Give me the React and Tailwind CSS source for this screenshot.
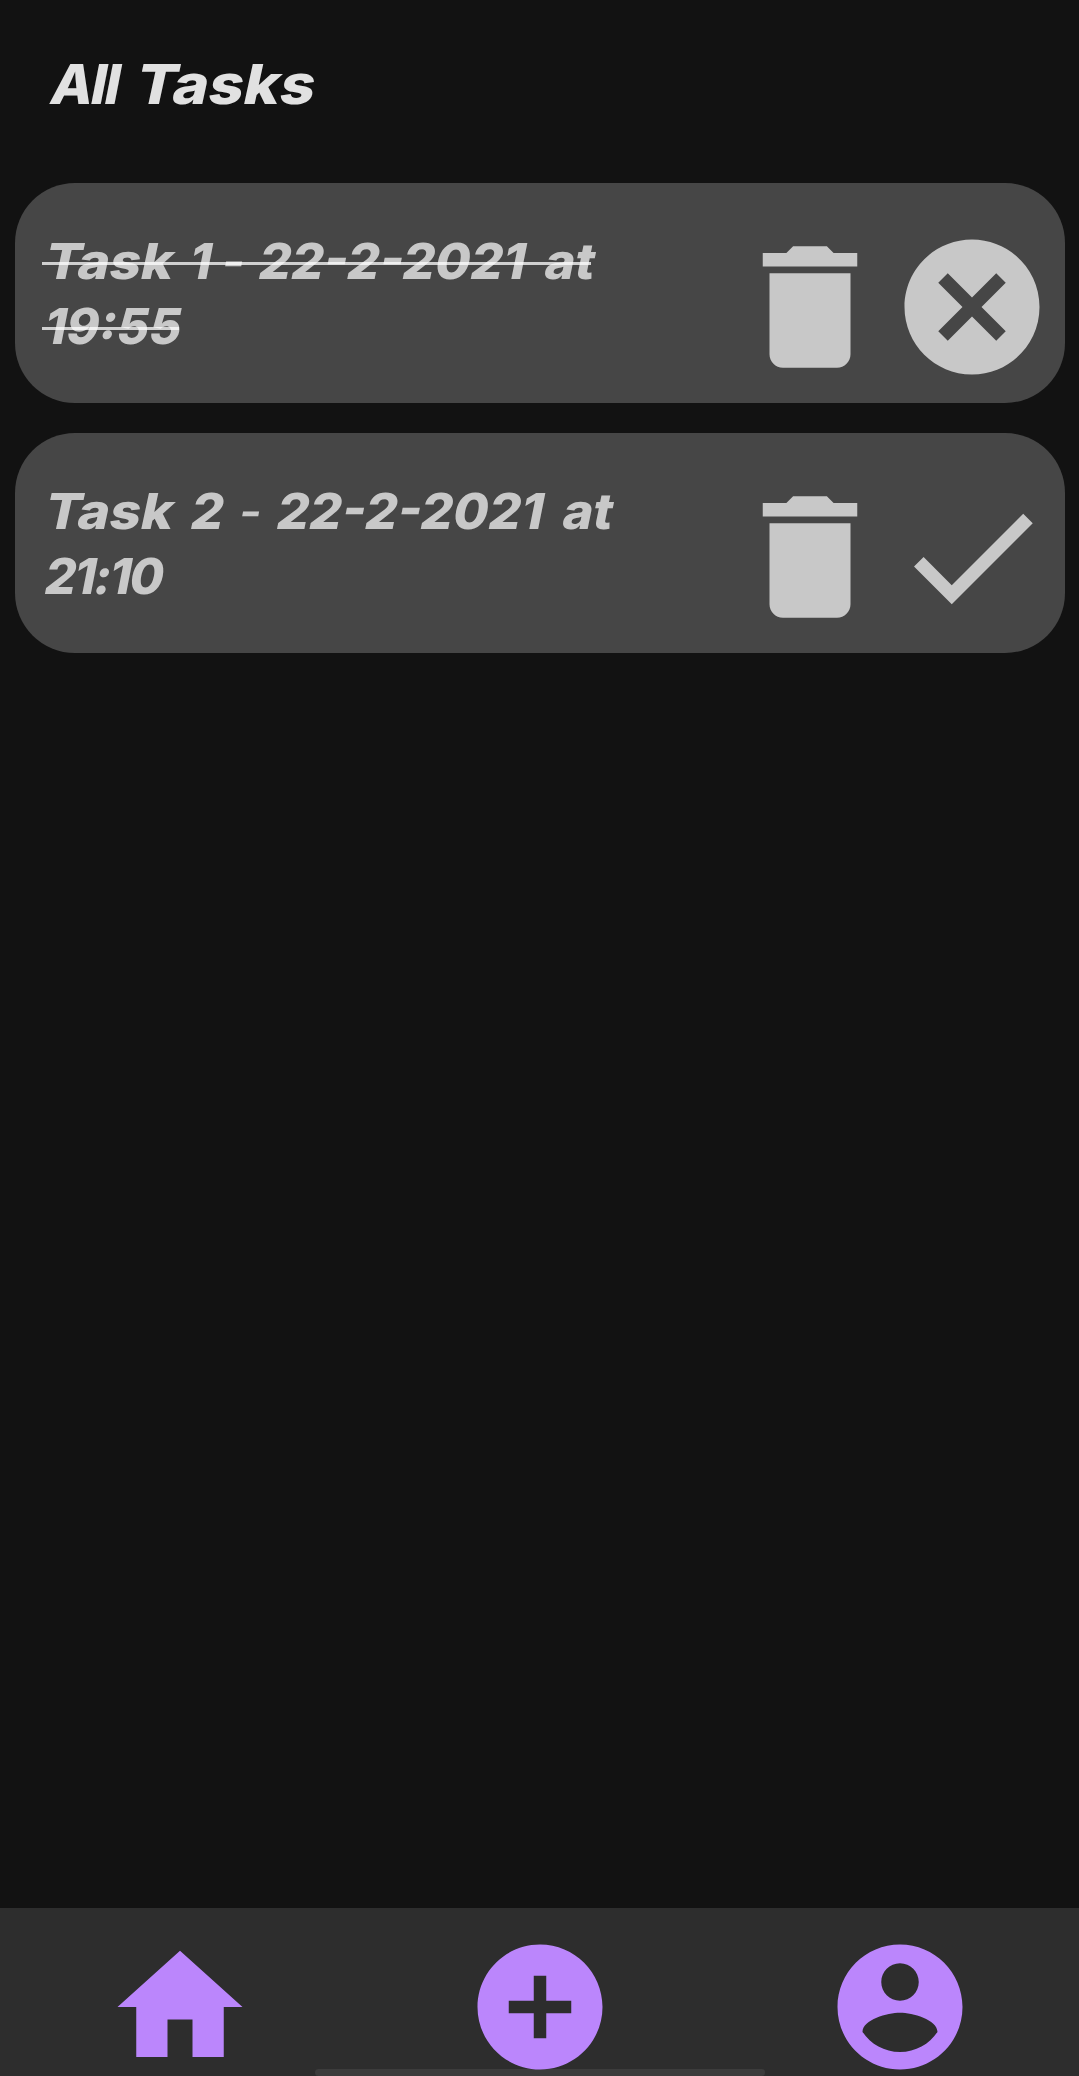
const ICONS = {
  trash: "M6 19c0 1.1.9 2 2 2h8c1.1 0 2-.9 2-2V7H6v12zM19 4h-3.5l-1-1h-5l-1 1H5v2h14V4z",
  cancel:
    "M12 2C6.47 2 2 6.47 2 12s4.47 10 10 10 10-4.47 10-10S17.53 2 12 2zm5 13.59L15.59 17 12 13.41 8.41 17 7 15.59 10.59 12 7 8.41 8.41 7 12 10.59 15.59 7 17 8.41 13.41 12 17 15.59z",
  check: "M9 16.17L4.83 12l-1.42 1.41L9 19 21 7l-1.41-1.41L9 16.17z",
  home: "M10 20v-6h4v6h5v-8h3L12 3 2 12h3v8z",
  add: "M12 2C6.48 2 2 6.48 2 12s4.48 10 10 10 10-4.48 10-10S17.52 2 12 2zm5 11h-4v4h-2v-4H7v-2h4V7h2v4h4v2z",
  account:
    "M12 2C6.48 2 2 6.48 2 12s4.48 10 10 10 10-4.48 10-10S17.52 2 12 2zm0 3c1.66 0 3 1.34 3 3s-1.34 3-3 3-3-1.34-3-3 1.34-3 3-3zm0 14.2c-2.5 0-4.71-1.28-6-3.22.03-1.99 4-3.08 6-3.08 1.99 0 5.97 1.09 6 3.08-1.29 1.94-3.5 3.22-6 3.22z",
};

function Icon({ name, className }) {
  return (
    <svg viewBox="0 0 24 24" fill="currentColor" className={className}>
      <path d={ICONS[name]} />
    </svg>
  );
}

const TASKS = [
  {
    done: true,
    lines: [
      [
        ["Task", "w-[145px] scale-x-[1.1]"],
        ["1", "w-[32px]"],
        ["-", "w-[37px] font-medium"],
        ["22-2-2021", "w-[286px] scale-x-[1.03]"],
        ["at", "w-[49px] scale-x-[1.04]"],
      ],
      [["19:55", "w-[137px]"]],
    ],
  },
  {
    done: false,
    lines: [
      [
        ["Task", "w-[146px] scale-x-[1.1]"],
        ["2", "w-[48px] scale-x-[1.04]"],
        ["-", "w-[38px] font-medium"],
        ["22-2-2021", "w-[286px] scale-x-[1.03]"],
        ["at", "w-[49px] scale-x-[1.04]"],
      ],
      [["21:10", "w-[120px] tracking-[-2px]"]],
    ],
  },
];

function TaskCard({ task }) {
  return (
    <article className="flex h-[220px] justify-between rounded-[60px] bg-[#464646] pt-[46px] pr-[11.7px] pl-[27px] text-[#c8c8c8]">
      <div className="text-[49.5px] leading-[65px] font-extrabold">
        {task.lines.map((line, i) => (
          <div key={i} className="relative flex w-fit whitespace-pre">
            {line.map(([word, cls], j) => (
              <span key={j} className={`block origin-[0_51px] -skew-x-[11deg] ${cls}`}>
                {word}
              </span>
            ))}
            {task.done && <span className="absolute inset-x-0 top-[33px] h-[3px] bg-white/75" />}
          </div>
        ))}
      </div>
      <div className="-mt-[3px] flex">
        <Icon name="trash" className="size-[162px]" />
        <Icon name={task.done ? "cancel" : "check"} className="size-[162px]" />
      </div>
    </article>
  );
}

export default function App() {
  return (
    <div className="flex h-[2076px] w-[1079px] flex-col overflow-hidden bg-[#121212] font-['Inter',sans-serif]">
      <h1 className="flex h-[183px] pt-[51px] pl-[48px] text-[55px] leading-[66px] font-extrabold text-[#e1e1e1]">
        <span className="block w-[85px] origin-[0_53px] -skew-x-[11deg] tracking-[-2px]">All</span>
        <span className="block origin-[0_53px] scale-x-[1.11] -skew-x-[11deg]">Tasks</span>
      </h1>
      <main className="flex flex-1 flex-col gap-[30px] pr-[14px] pl-[15px]">
        {TASKS.map((task, i) => (
          <TaskCard key={i} task={task} />
        ))}
      </main>
      <nav className="relative flex h-[168px] justify-between bg-[#2d2d2d] pt-6 pr-[104px] pl-[105px] text-[#bb86fc]">
        <div className="absolute bottom-0 left-[315px] h-[7px] w-[450px] rounded-full bg-[#3c3c3c]" />
        <Icon name="home" className="relative size-[150px]" />
        <Icon name="add" className="relative size-[150px]" />
        <Icon name="account" className="relative size-[150px]" />
      </nav>
    </div>
  );
}
